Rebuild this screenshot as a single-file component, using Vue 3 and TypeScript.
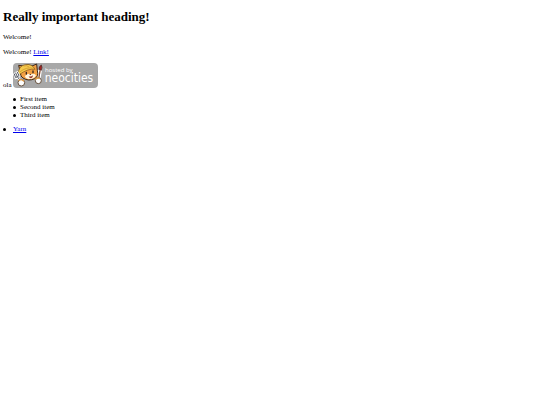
<script setup lang="ts">
const items: string[] = ['First item', 'Second item', 'Third item']
</script>

<template>
  <main class="page">
    <h1>Really important heading!</h1>
    <p>Welcome!</p>
    <p>Welcome! <a href="#link">Link!</a></p>
    <div class="hosting">
      <span>ola</span>
      <a class="badge" href="#host" aria-label="hosted by neocities">
        <svg viewBox="0 0 255 75" aria-hidden="true">
          <rect width="255" height="75" rx="12" fill="#a8a8a8" />
          <!-- brush -->
          <path d="M77 48 L81 23" stroke="#fff" stroke-width="11" stroke-linecap="round" />
          <path d="M77 48 L81 24" stroke="#8b4a2b" stroke-width="4" stroke-linecap="round" />
          <path d="M78 20 Q77 10 85 6 Q89 13 85 22 Z" fill="#a52422" stroke="#42201c" stroke-width="2" />
          <!-- cat -->
          <path d="M22 29 L17 7 L32 9 Q45 1 57 9 L71 3 L73 23 Q78 40 65 47 Q46 56 30 45 Q22 41 22 29 Z" fill="#f2a044" stroke="#3d2819" stroke-width="3" />
          <path d="M15 33 Q17 9 36 5 Q57 1 66 19 Q46 15 17 36 Z" fill="#f4ca4d" stroke="#805619" stroke-width="2" />
          <path d="M20 27 Q42 10 62 16 M32 9 Q42 6 48 12" fill="none" stroke="#c98e2c" stroke-width="2" />
          <path d="M36 39 Q46 29 52 34 Q66 29 69 38 Q61 49 47 48 Q37 47 36 39 Z" fill="#fff4df" />
          <path d="M40 28 v5 M60 24 v5" stroke="#332620" stroke-width="4" stroke-linecap="round" />
          <path d="M49 33 h6 l-3 4 Z" fill="#4b2920" />
          <path d="M47 40 Q54 42 60 37 Q59 46 53 46 Q48 45 47 40 Z" fill="#9f3b2c" />
          <!-- fork -->
          <path d="M4 33 L8 44 L18 38 L13 28 M8 30 L13 41 L22 53" fill="none" stroke="#fff" stroke-width="7" stroke-linecap="round" />
          <path d="M4 33 L8 44 L18 38 L13 28 M8 30 L13 41 L22 53" fill="none" stroke="#555963" stroke-width="3" stroke-linecap="round" />
          <!-- paws -->
          <circle cx="25" cy="59" r="10" fill="#fff" stroke="#66513e" stroke-width="3" />
          <path d="M17 53 Q24 46 33 55" fill="none" stroke="#e39b42" stroke-width="4" />
          <circle cx="76" cy="53" r="9" fill="#fff" stroke="#66513e" stroke-width="3" />
          <path d="M67 50 Q71 43 80 46" fill="none" stroke="#e39b42" stroke-width="4" />
          <text class="small" x="96" y="27">hosted by</text>
          <text class="name" x="95" y="58">neocities</text>
        </svg>
      </a>
    </div>
    <ul>
      <li v-for="item in items" :key="item">{{ item }}</li>
    </ul>
    <ul class="links">
      <li><a href="#yarn">Yarn</a></li>
    </ul>
  </main>
</template>

<style>
body {
  background: #fff;
}
</style>

<style scoped>
.page {
  padding: 9px 3px;
  color: #000;
  font: 7px/8px "Liberation Serif", "Times New Roman", serif;
}
h1 {
  margin: 0 0 8px;
  font-size: 13px;
  line-height: 16px;
}
p {
  margin: 0 0 7px;
}
a {
  color: #0000ee;
}
.hosting {
  display: flex;
  align-items: flex-end;
  gap: 1px;
}
.hosting span {
  line-height: 6px;
}
.badge,
.badge svg {
  display: block;
}
.badge svg {
  width: 85px;
  height: 25px;
}
.badge text {
  fill: #fff;
}
.badge .small {
  font-family: "Open Sans", sans-serif;
  font-size: 18px;
}
.badge .name {
  font-family: "DejaVu Sans Condensed", "DejaVu Sans", sans-serif;
  font-size: 36px;
}
ul {
  margin: 7px 0 6px;
  padding-left: 10px;
  list-style: none;
}
li {
  display: flex;
  align-items: center;
  gap: 4px;
}
li::before {
  content: "";
  width: 3px;
  height: 3px;
  border-radius: 50%;
  background: #000;
}
.links {
  margin: 0;
  padding: 0;
}
.links li {
  gap: 7px;
}
</style>
